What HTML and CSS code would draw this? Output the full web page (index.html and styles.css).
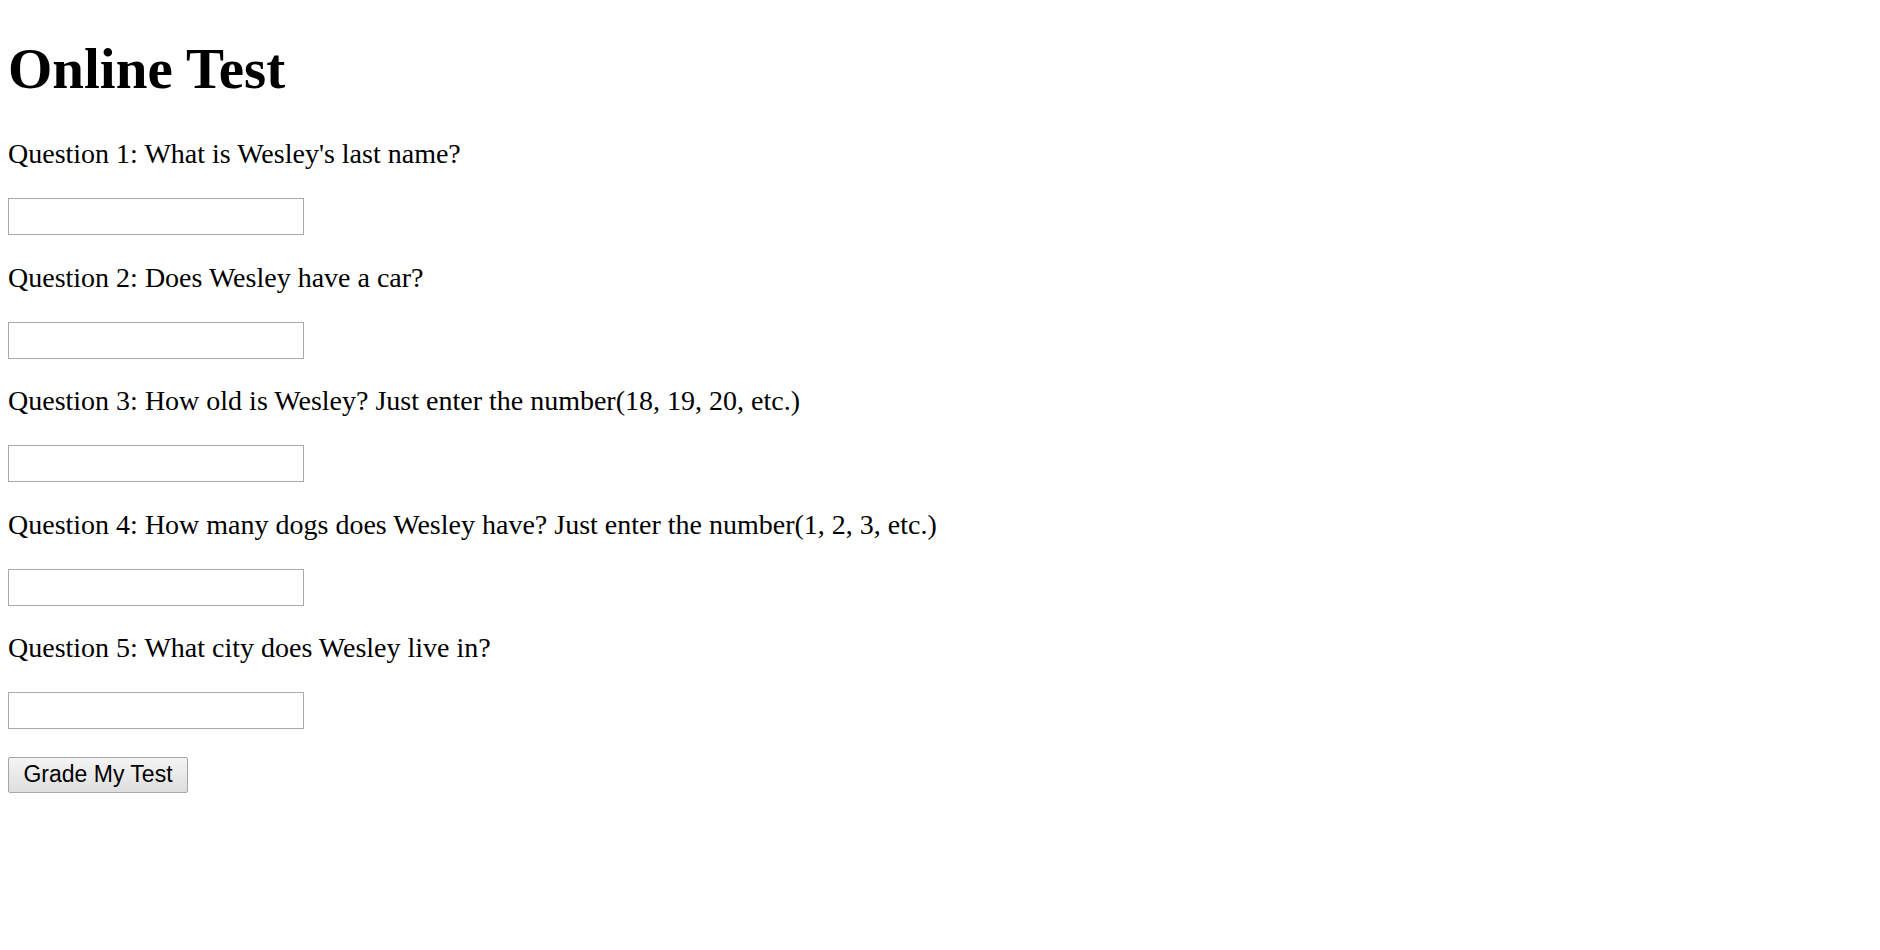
FILE: index.html
```html
<!DOCTYPE html>
<html>
<head>
<meta charset="utf-8">
<title>Online Test</title>
<link rel="stylesheet" href="styles.css">
</head>
<body>
<main class="page">
  <h1 class="title">Online Test</h1>
  <form class="quiz">
    <p class="question">Question 1: What is Wesley's last name?</p>
    <div class="answer"><input class="field" type="text"></div>
    <p class="question">Question 2: Does Wesley have a car?</p>
    <div class="answer"><input class="field" type="text"></div>
    <p class="question">Question 3: How old is Wesley? Just enter the number(18, 19, 20, etc.)</p>
    <div class="answer"><input class="field" type="text"></div>
    <p class="question">Question 4: How many dogs does Wesley have? Just enter the number(1, 2, 3, etc.)</p>
    <div class="answer"><input class="field" type="text"></div>
    <p class="question">Question 5: What city does Wesley live in?</p>
    <div class="answer"><input class="field" type="text"></div>
    <div class="actions"><button class="grade" type="button">Grade My Test</button></div>
  </form>
</main>
</body>
</html>
```
FILE: styles.css
```css
html, body {
  margin: 0;
  padding: 0;
  background: #ffffff;
}
.page {
  padding: 0 8px;
  font-family: "Liberation Serif", "Times New Roman", serif;
  color: #000000;
}
.title {
  font-size: 57px;
  font-weight: bold;
  line-height: 64px;
  margin: 37px 0 37px 0;
}
.quiz {
  margin: 0;
}
.question {
  font-size: 28px;
  line-height: 32px;
  margin: 0;
}
.answer {
  padding: 28px 0 26.5px 0;
}
.field {
  display: block;
  box-sizing: border-box;
  width: 296px;
  height: 37px;
  margin: 0;
  border: 1px solid #a9a9a9;
  border-radius: 0;
  background: #ffffff;
  font-family: "Liberation Sans", Arial, sans-serif;
  font-size: 23px;
  padding: 2px 4px;
  outline: none;
}
.actions {
  padding-top: 1px;
}
.grade {
  display: block;
  box-sizing: border-box;
  width: 180px;
  height: 36px;
  margin: 0;
  padding: 0;
  border: 1px solid #a6a6a6;
  border-radius: 2px;
  background: linear-gradient(#f4f4f4, #dedede);
  font-family: "Liberation Sans", Arial, sans-serif;
  font-size: 23px;
  color: #000000;
}
```
